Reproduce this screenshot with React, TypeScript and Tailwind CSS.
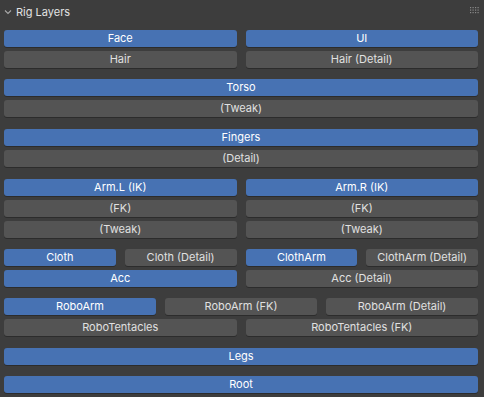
import React from "react";

type Btn = { label: string; on?: boolean };

const FONT = { fontFamily: 'Inter, "Noto Sans", "Liberation Sans", sans-serif' };

function LayerButton({ label, on }: Btn) {
  return (
    <div
      className={
        "h-[17px] rounded-[3px] flex items-center justify-center text-[11px] leading-none truncate shadow-[0_1px_0_#2c2c2c] " +
        (on ? "bg-[#4772b3] text-white" : "bg-[#545454] text-[#e0e0e0]")
      }
    >
      {label}
    </div>
  );
}

// cols: how many buttons sit side by side in a row
function Row({ items, cols }: { items: Btn[]; cols: 1 | 2 | 3 | 4 }) {
  const grid =
    cols === 1
      ? "grid-cols-1"
      : cols === 2
      ? "grid-cols-2"
      : cols === 3
      ? "grid-cols-3"
      : "grid-cols-4";
  return (
    <div className={"grid gap-x-[9px] " + grid}>
      {items.map((b) => (
        <LayerButton key={b.label} {...b} />
      ))}
    </div>
  );
}

function GripDots() {
  const dots = [];
  for (let r = 0; r < 3; r++)
    for (let c = 0; c < 4; c++)
      dots.push(<rect key={r + "-" + c} x={c * 2.5} y={r * 2.5} width="1.2" height="1.2" fill="#8a8a8a" />);
  return (
    <svg width="10" height="7" viewBox="0 0 10 7">
      {dots}
    </svg>
  );
}

export default function App() {
  return (
    <div className="w-[484px] h-[397px] bg-[#3d3d3d] overflow-hidden" style={FONT}>
      {/* header */}
      <div className="h-[24px] flex items-center pl-[4px] pr-[4px]">
        <svg width="8" height="6" viewBox="0 0 8 6" className="mr-[4px]">
          <path d="M1 1.5 L4 4.5 L7 1.5" stroke="#a8a8a8" strokeWidth="1.1" fill="none" />
        </svg>
        <span className="text-[11px] text-[#e2e2e2]">Rig Layers</span>
        <div className="ml-auto mr-[0px] mt-[-4px]">
          <GripDots />
        </div>
      </div>

      {/* body */}
      <div className="pl-[4px] pr-[6px] pt-[6px] flex flex-col">
        <div className="flex flex-col gap-[4px]">
          <Row cols={2} items={[{ label: "Face", on: true }, { label: "UI", on: true }]} />
          <Row cols={2} items={[{ label: "Hair" }, { label: "Hair (Detail)" }]} />
        </div>

        <div className="flex flex-col gap-[4px] mt-[11px]">
          <Row cols={1} items={[{ label: "Torso", on: true }]} />
          <Row cols={1} items={[{ label: "(Tweak)" }]} />
        </div>

        <div className="flex flex-col gap-[4px] mt-[12px]">
          <Row cols={1} items={[{ label: "Fingers", on: true }]} />
          <Row cols={1} items={[{ label: "(Detail)" }]} />
        </div>

        <div className="flex flex-col gap-[4px] mt-[12px]">
          <Row cols={2} items={[{ label: "Arm.L (IK)", on: true }, { label: "Arm.R (IK)", on: true }]} />
          <Row cols={2} items={[{ label: "(FK)" }, { label: "(FK) " }]} />
          <Row cols={2} items={[{ label: "(Tweak)" }, { label: "(Tweak) " }]} />
        </div>

        <div className="flex flex-col gap-[4px] mt-[11px]">
          <Row
            cols={4}
            items={[
              { label: "Cloth", on: true },
              { label: "Cloth (Detail)" },
              { label: "ClothArm", on: true },
              { label: "ClothArm (Detail)" },
            ]}
          />
          <Row cols={2} items={[{ label: "Acc", on: true }, { label: "Acc (Detail)" }]} />
        </div>

        <div className="flex flex-col gap-[4px] mt-[11px]">
          <Row
            cols={3}
            items={[{ label: "RoboArm", on: true }, { label: "RoboArm (FK)" }, { label: "RoboArm (Detail)" }]}
          />
          <Row cols={2} items={[{ label: "RoboTentacles" }, { label: "RoboTentacles (FK)" }]} />
        </div>

        <div className="mt-[12px]">
          <Row cols={1} items={[{ label: "Legs", on: true }]} />
        </div>

        <div className="mt-[11px]">
          <Row cols={1} items={[{ label: "Root", on: true }]} />
        </div>
      </div>
    </div>
  );
}
